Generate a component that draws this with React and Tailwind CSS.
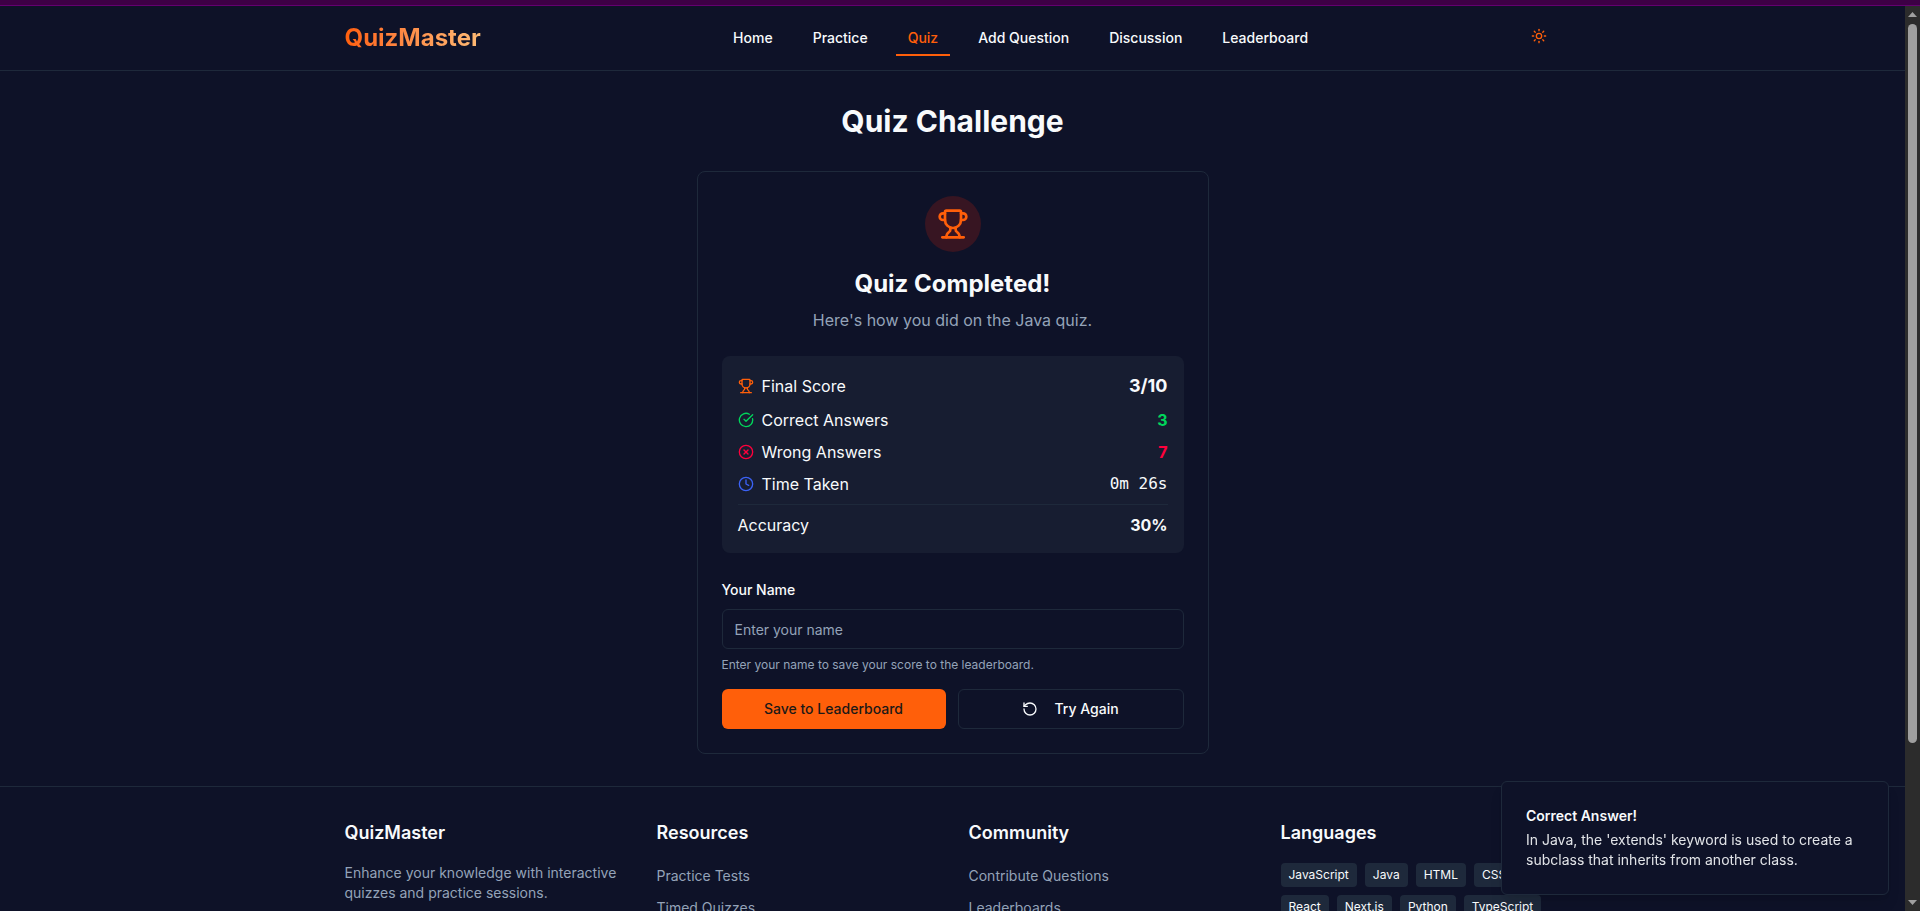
import { CircleCheckBig, CircleX, Clock, RotateCcw, Sun, Trophy } from "lucide-react";

const navLinks = ["Home", "Practice", "Quiz", "Add Question", "Discussion", "Leaderboard"];
const languages = ["JavaScript", "Java", "HTML", "CSS", "React", "Next.js", "Python", "TypeScript"];

function Header() {
  return (
    <header className="border-b border-[#1e293b]">
      <div className="mx-auto flex h-16 max-w-7xl items-center px-8">
        <a
          href="#home"
          className="bg-gradient-to-r from-[#ff5f0a] to-[#fdba74] bg-clip-text text-2xl font-bold text-transparent"
        >
          QuizMaster
        </a>
        <nav className="flex flex-1 justify-center gap-4 pl-11">
          {navLinks.map((label) => (
            <a
              key={label}
              href={`#${label.toLowerCase().replace(" ", "-")}`}
              aria-current={label === "Quiz" ? "page" : undefined}
              className={
                label === "Quiz"
                  ? "border-b-2 border-[#ff5f0a] px-3 pt-2 pb-1.5 text-sm font-medium text-[#ff5f0a]"
                  : "border-b-2 border-transparent px-3 pt-2 pb-1.5 text-sm font-medium"
              }
            >
              {label}
            </a>
          ))}
        </nav>
        <button type="button" aria-label="Toggle theme" className="flex w-11 justify-center pb-1 text-[#ff5f0a]">
          <Sun size={16} />
        </button>
      </div>
    </header>
  );
}

function StatRow({ icon, label, value, valueClass }) {
  return (
    <div className="flex items-center justify-between">
      <dt className="flex items-center gap-2">
        {icon}
        {label}
      </dt>
      <dd className={valueClass}>{value}</dd>
    </div>
  );
}

function ResultCard() {
  return (
    <section className="mx-auto max-w-lg rounded-lg border border-[#1e293b] p-6">
      <div className="flex flex-col items-center text-center">
        <div className="rounded-full bg-[#371522] p-3 text-[#ff5f0a]">
          <Trophy size={32} />
        </div>
        <h2 className="mt-4 text-2xl font-bold">Quiz Completed!</h2>
        <p className="mt-2 text-[#94a3b8]">Here's how you did on the Java quiz.</p>
      </div>

      <dl className="mt-6 flex flex-col gap-2 rounded-lg bg-[#171d31] p-4">
        <StatRow
          icon={<Trophy size={16} className="text-[#ff5f0a]" />}
          label="Final Score"
          value="3/10"
          valueClass="text-lg font-bold"
        />
        <StatRow
          icon={<CircleCheckBig size={16} className="text-[#00d65b]" />}
          label="Correct Answers"
          value="3"
          valueClass="font-bold text-[#00d65b]"
        />
        <StatRow
          icon={<CircleX size={16} className="text-[#ff003c]" />}
          label="Wrong Answers"
          value="7"
          valueClass="font-bold text-[#ff003c]"
        />
        <StatRow
          icon={<Clock size={16} className="text-[#3b62f6]" />}
          label="Time Taken"
          value="0m 26s"
          valueClass="font-['DejaVu_Sans_Mono',monospace]"
        />
        <div className="border-t border-[#1e293b] pt-2">
          <StatRow label="Accuracy" value="30%" valueClass="font-bold" />
        </div>
      </dl>

      <form className="mt-6" onSubmit={(event) => event.preventDefault()}>
        <div>
          <label htmlFor="player-name" className="text-sm font-medium">
            Your Name
          </label>
        </div>
        <input
          id="player-name"
          type="text"
          placeholder="Enter your name"
          aria-describedby="player-name-hint"
          className="mt-2 h-10 w-full rounded-md border border-[#1e293b] bg-transparent px-3 text-sm placeholder:text-[#94a3b8]"
        />
        <p id="player-name-hint" className="mt-2 text-xs text-[#94a3b8]">
          Enter your name to save your score to the leaderboard.
        </p>
        <div className="mt-4 flex gap-3">
          <button type="submit" className="h-10 flex-1 rounded-md bg-[#ff5f0a] px-4 text-sm font-medium text-[#1c1917]">
            Save to Leaderboard
          </button>
          <button
            type="button"
            className="flex h-10 flex-1 items-center justify-center gap-4 rounded-md border border-[#1e293b] px-4 text-sm font-medium"
          >
            <RotateCcw size={16} />
            Try Again
          </button>
        </div>
      </form>
    </section>
  );
}

function LinkColumn({ title, links }) {
  return (
    <div>
      <h3 className="text-lg font-semibold">{title}</h3>
      <ul className="mt-4 space-y-2">
        {links.map((link) => (
          <li key={link}>
            <a href={`#${link.toLowerCase().replace(" ", "-")}`} className="text-sm text-[#94a3b8]">
              {link}
            </a>
          </li>
        ))}
      </ul>
    </div>
  );
}

function Footer() {
  return (
    <footer className="border-t border-[#1e293b]">
      <div className="mx-auto grid max-w-7xl grid-cols-4 gap-8 px-8 py-8">
        <div>
          <h3 className="text-lg font-semibold">QuizMaster</h3>
          <p className="mt-4 text-sm text-[#94a3b8]">
            Enhance your knowledge with interactive quizzes and practice sessions.
          </p>
        </div>
        <LinkColumn title="Resources" links={["Practice Tests", "Timed Quizzes"]} />
        <LinkColumn title="Community" links={["Contribute Questions", "Leaderboards"]} />
        <div>
          <h3 className="text-lg font-semibold">Languages</h3>
          <ul className="mt-4 flex flex-wrap gap-2">
            {languages.map((language) => (
              <li key={language} className="rounded bg-[#1e293b] px-2 py-1 text-xs">
                {language}
              </li>
            ))}
          </ul>
        </div>
      </div>
    </footer>
  );
}

function Toast() {
  return (
    <div
      role="status"
      className="absolute right-4 bottom-4 w-full max-w-[388px] rounded-md border border-[#1e293b] bg-[#0e1228] p-6 text-sm shadow-lg"
    >
      <p className="font-semibold">Correct Answer!</p>
      <p className="mt-1 opacity-90">
        In Java, the 'extends' keyword is used to create a subclass that inherits from another class.
      </p>
    </div>
  );
}

function Scrollbar() {
  return (
    <div aria-hidden="true" className="flex w-[15px] shrink-0 flex-col items-center bg-[#2c2c2c] py-1.5">
      <svg width="9" height="5" viewBox="0 0 9 5" className="shrink-0 fill-[#9f9f9f]">
        <path d="M4.5 0 9 5H0Z" />
      </svg>
      <div className="mt-[7px] w-[9px] flex-[718] rounded-full bg-[#9f9f9f]" />
      <div className="flex-[157]" />
      <svg width="9" height="5" viewBox="0 0 9 5" className="shrink-0 fill-[#9f9f9f]">
        <path d="M4.5 5 9 0H0Z" />
      </svg>
    </div>
  );
}

export default function App() {
  return (
    <div className="flex h-screen flex-col overflow-hidden bg-[#0e1228] font-['Inter',sans-serif] text-[#f8fafc]">
      <div className="h-1.5 shrink-0 border-b border-[#640070] bg-[#3d0045]" />
      <div className="flex min-h-0 flex-1">
        <div className="relative min-w-0 flex-1 overflow-hidden">
          <Header />
          <main className="px-8 py-8">
            <h1 className="mb-8 text-center text-3xl font-bold">Quiz Challenge</h1>
            <ResultCard />
          </main>
          <Footer />
          <Toast />
        </div>
        <Scrollbar />
      </div>
    </div>
  );
}
